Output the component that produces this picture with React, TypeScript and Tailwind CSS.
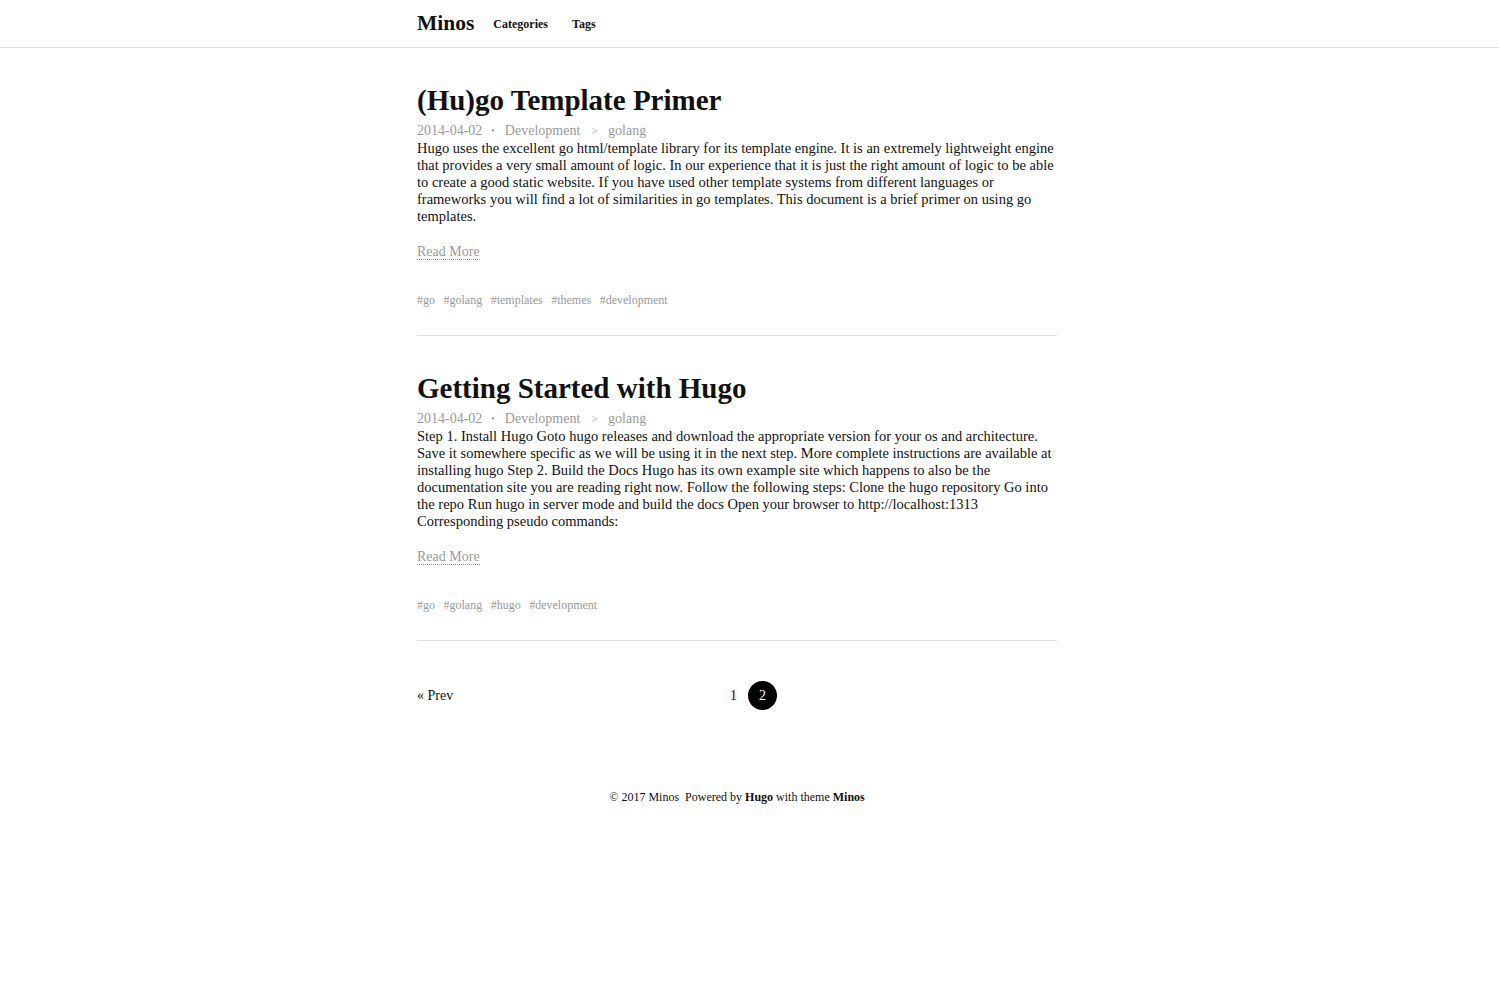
const posts = [
  {
    title: "(Hu)go Template Primer",
    date: "2014-04-02",
    category: "Development",
    sub: "golang",
    summary:
      "Hugo uses the excellent go html/template library for its template engine. It is an extremely lightweight engine that provides a very small amount of logic. In our experience that it is just the right amount of logic to be able to create a good static website. If you have used other template systems from different languages or frameworks you will find a lot of similarities in go templates. This document is a brief primer on using go templates.",
    tags: ["go", "golang", "templates", "themes", "development"],
  },
  {
    title: "Getting Started with Hugo",
    date: "2014-04-02",
    category: "Development",
    sub: "golang",
    summary:
      "Step 1. Install Hugo Goto hugo releases and download the appropriate version for your os and architecture. Save it somewhere specific as we will be using it in the next step. More complete instructions are available at installing hugo Step 2. Build the Docs Hugo has its own example site which happens to also be the documentation site you are reading right now. Follow the following steps: Clone the hugo repository Go into the repo Run hugo in server mode and build the docs Open your browser to http://localhost:1313 Corresponding pseudo commands:",
    tags: ["go", "golang", "hugo", "development"],
  },
];

type Post = (typeof posts)[number];

const PostItem = ({ post }: { post: Post }) => (
  <article className="border-b border-[#ddd] pt-[34px] pb-[28px]">
    <h2 className="text-[29px] leading-[36px] font-bold text-[#111] mb-[4px]">{post.title}</h2>
    <div className="text-[14px] leading-[18px] text-[#999] flex items-center">
      <span>{post.date}</span>
      <span className="ml-[9px] mr-[10px] text-[10px]">•</span>
      <span>{post.category}</span>
      <span className="ml-[11px] mr-[10px] text-[12px]">&gt;</span>
      <span>{post.sub}</span>
    </div>
    <p className="text-[14.5px] leading-[17px] text-[#111]">{post.summary}</p>
    <div className="mt-[14px]">
      <a className="text-[14px] leading-[18px] text-[#999] border-b border-dotted border-[#999]">Read More</a>
    </div>
    <div className="mt-[30px] flex gap-[8.5px] text-[12px] leading-[14px] text-[#999]">
      {post.tags.map((t) => (
        <span key={t}>#{t}</span>
      ))}
    </div>
  </article>
);

export default function App() {
  return (
    <div className="min-h-screen bg-white font-['Liberation_Serif',serif] text-[#111]">
      <header className="border-b border-[#ddd] pr-[25px]">
        <nav className="mx-auto w-[640px] h-[47px] flex items-center">
          <span className="text-[21.5px] font-bold">Minos</span>
          <span className="ml-[19px] text-[12px] font-bold">Categories</span>
          <span className="ml-[24px] text-[12px] font-bold">Tags</span>
        </nav>
      </header>
      <main className="pr-[25px]">
        <div className="mx-auto w-[640px]">
          {posts.map((p) => (
            <PostItem key={p.title} post={p} />
          ))}
          <div className="mt-[40px] flex items-center text-[14px] h-[28px]">
            <span className="w-[313px]">« Prev</span>
            <span className="text-[#111]">1</span>
            <span className="ml-[11px] w-[29px] h-[29px] rounded-full bg-black text-white flex items-center justify-center">2</span>
          </div>
        </div>
        <footer className="mt-[79px] text-center text-[12px] text-[#111]">
          © 2017 Minos&nbsp; Powered by <b>Hugo</b> with theme <b>Minos</b>
        </footer>
      </main>
    </div>
  );
}
